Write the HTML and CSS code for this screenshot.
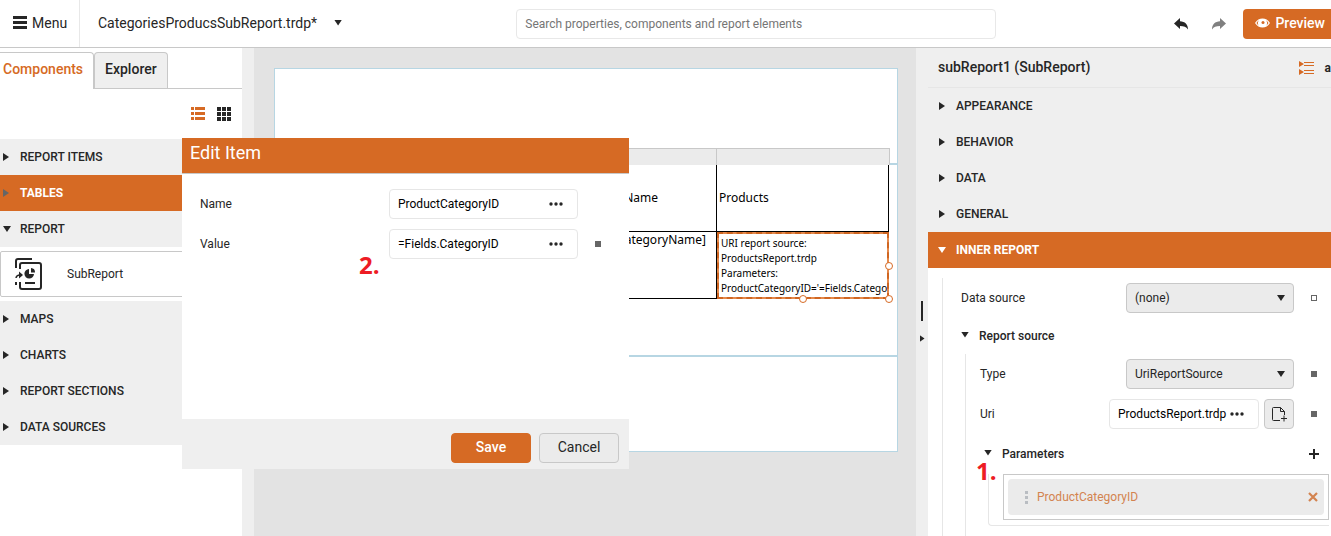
FILE: index.html
```html
<!DOCTYPE html>
<html lang="en">
<head>
<meta charset="utf-8">
<title>Web Report Designer</title>
<link rel="stylesheet" href="styles.css">
</head>
<body>
<div class="app">
  <header class="topbar">
    <button class="menu" type="button">
      <svg width="14" height="13" viewBox="0 0 14 13"><path d="M0 0h14v3H0zM0 5h14v3H0zM0 10h14v3H0z" fill="currentColor"/></svg>
      Menu
    </button>
    <button class="file" type="button">CategoriesProducsSubReport.trdp*<span class="tri-down"></span></button>
    <div class="search"><input type="text" aria-label="Search" placeholder="Search properties, components and report elements"></div>
    <div class="actions">
      <button class="icon-btn" type="button" aria-label="Undo">
        <svg width="14" height="12" viewBox="0 0 14 12"><path d="M0 5.500 6 0v3.200c5 .2 8 3 8 8.300-1.800-2.800-4-3.600-8-3.600V11z" fill="#262626"/></svg>
      </button>
      <button class="icon-btn" type="button" aria-label="Redo">
        <svg width="14" height="12" viewBox="0 0 14 12"><path d="M14 5.500 8 0v3.200C3 3.400 0 6.200 0 11.500c1.800-2.800 4-3.600 8-3.600V11z" fill="#808080"/></svg>
      </button>
      <button class="preview" type="button">
        <svg width="15" height="10" viewBox="0 0 15 10"><path d="M0 5C2 1.800 4.500.500 7.500.500S13 1.800 15 5c-2 3.200-4.500 4.500-7.500 4.500S2 8.200 0 5z" fill="#fff"/><path d="M4 2.200a4.300 4.300 0 0 0 0 5.600A8 8 0 0 1 1.500 5 8 8 0 0 1 4 2.200zM11 2.200a4.300 4.300 0 0 1 0 5.600A8 8 0 0 0 13.500 5 8 8 0 0 0 11 2.200z" fill="#d66a24"/><circle cx="8" cy="4.500" r="1.500" fill="#d66a24"/></svg>
        Preview
      </button>
    </div>
  </header>

  <div class="workspace">
    <aside class="left">
      <nav class="tabs">
        <button class="tab active" type="button">Components</button>
        <button class="tab" type="button">Explorer</button>
      </nav>
      <div class="view-tools">
        <button class="icon-btn" type="button" aria-label="List view">
          <svg width="14" height="14" viewBox="0 0 14 14"><path d="M0 0h3v3H0zM4 0h10v3H4zM0 5h3v3H0zM4 5h10v3H4zM0 10h3v3H0zM4 10h10v3H4z" fill="#d66a24"/></svg>
        </button>
        <button class="icon-btn" type="button" aria-label="Grid view">
          <svg width="14" height="14" viewBox="0 0 14 14"><path d="M0 0h4v4H0zM5 0h4v4H5zM10 0h4v4h-4zM0 5h4v4H0zM5 5h4v4H5zM10 5h4v4h-4zM0 10h4v4H0zM5 10h4v4H5zM10 10h4v4h-4z" fill="#262626"/></svg>
        </button>
      </div>
      <button class="group" type="button"><span class="tri-right"></span>REPORT ITEMS</button>
      <button class="group selected" type="button"><span class="tri-right"></span>TABLES</button>
      <button class="group" type="button"><span class="tri-down"></span>REPORT</button>
      <button class="component" type="button">
        <svg width="28" height="32" viewBox="0 0 28 32" fill="none" stroke="#262626" stroke-width="2"><path d="M17 1H3q-2 0-2 2v7M1 24v3M5 11V7q0-2 2-2h17q2 0 2 2v22q0 2-2 2H7q-2 0-2-2v-5"/><path d="M10 25h10"/><path d="M1 20q.500-3 4-3" stroke-width="1.500"/><path d="m4 13.500 4 3.500-4 3.500z" fill="#262626" stroke="none"/><path d="M14 11a4.800 4.800 0 1 0 5 5h-5z" fill="#262626" stroke="none"/><path d="M16 10v4.500h4A4.300 4.300 0 0 0 16 10z" fill="#262626" stroke="none"/></svg>
        SubReport
      </button>
      <button class="group" type="button"><span class="tri-right"></span>MAPS</button>
      <button class="group" type="button"><span class="tri-right"></span>CHARTS</button>
      <button class="group" type="button"><span class="tri-right"></span>REPORT SECTIONS</button>
      <button class="group" type="button"><span class="tri-right"></span>DATA SOURCES</button>
    </aside>
    <div class="splitter"></div>

    <main class="canvas">
      <div class="page">
        <div class="section"></div>
        <div class="section detail">
          <div class="report-table">
            <div class="ruler"><span></span><span></span></div>
            <table>
              <tr class="head"><td class="c1">Category Name</td><td class="c2">Products</td></tr>
              <tr><td class="c1 value">[CategoryName]</td><td class="c2 sub"><div class="source">URI report source:<br>ProductsReport.trdp<br>Parameters:<br>ProductCategoryID='=Fields.Catego</div></td></tr>
            </table>
            <i class="handle e"></i><i class="handle s"></i><i class="handle se"></i>
          </div>
        </div>
        <div class="section last"></div>
      </div>
    </main>
    <div class="splitter right-split"><span class="grip"></span><span class="tri-right"></span></div>

    <aside class="props">
      <div class="props-head">
        <h2>subReport1 (SubReport)</h2>
        <button class="icon-btn" type="button" aria-label="Categorized">
          <svg width="15" height="14" viewBox="0 0 15 14"><path d="M0 0l5 3-5 3zM0 8l5 3-5 3zM5 1h10v1H5zM5 4h10v1H5zM5 9h10v1H5zM5 12h10v1H5z" fill="#d66a24"/></svg>
        </button>
        <button class="sort" type="button">a</button>
      </div>
      <button class="category" type="button"><span class="tri-right"></span>APPEARANCE</button>
      <button class="category" type="button"><span class="tri-right"></span>BEHAVIOR</button>
      <button class="category" type="button"><span class="tri-right"></span>DATA</button>
      <button class="category" type="button"><span class="tri-right"></span>GENERAL</button>
      <button class="category selected" type="button"><span class="tri-down"></span>INNER REPORT</button>
      <div class="fields">
        <div class="row"><label for="ds">Data source</label>
          <div class="select"><select id="ds"><option>(none)</option></select><span class="tri-down"></span></div><span class="marker empty"></span></div>
        <button class="sub-head" type="button"><span class="tri-down"></span>Report source</button>
        <div class="nested">
          <div class="row"><label for="type">Type</label>
            <div class="select"><select id="type"><option>UriReportSource</option></select><span class="tri-down"></span></div><span class="marker"></span></div>
          <div class="row"><label for="uri">Uri</label>
            <div class="textbox uri"><input id="uri" type="text" value="ProductsReport.trdp"><button type="button" class="dots" aria-label="Edit Uri"><svg width="14" height="4" viewBox="0 0 14 4"><circle cx="2" cy="2" r="1.700"/><circle cx="7" cy="2" r="1.700"/><circle cx="12" cy="2" r="1.700"/></svg></button></div>
            <button class="new-file" type="button" aria-label="New report"><svg width="15" height="15" viewBox="0 0 15 15" fill="none" stroke="#262626"><path d="M8 13.500H1.500q-1 0-1-1v-11q0-1 1-1h7l4 4V8M8.500.500v4h4M9 11.500h6M12 8.500v6"/></svg></button>
            <span class="marker"></span></div>
          <div class="param-head"><button class="sub-head" type="button"><span class="tri-down"></span>Parameters</button>
            <button class="icon-btn" type="button" aria-label="Add parameter"><svg width="10" height="10" viewBox="0 0 10 10"><path d="M4 0h2v4h4v2H6v4H4V6H0V4h4z" fill="#262626"/></svg></button></div>
          <div class="params">
            <div class="param-box"><div class="param">
              <svg width="3" height="13" viewBox="0 0 3 13" fill="#b9bdc2"><path d="M0 0h3v3H0zM0 5h3v3H0zM0 10h3v3H0z"/></svg>
              <span>ProductCategoryID</span>
              <button class="icon-btn" type="button" aria-label="Remove parameter"><svg width="10" height="10" viewBox="0 0 10 10"><path d="m1 1 8 8M9 1 1 9" stroke="#d3834f" stroke-width="2.200"/></svg></button>
            </div></div>
          </div>
        </div>
      </div>
      <b class="callout one">1.</b>
    </aside>
  </div>

  <div class="dialog" role="dialog" aria-label="Edit Item">
    <h1>Edit Item</h1>
    <div class="dialog-body">
      <div class="dialog-row"><label for="name">Name</label>
        <div class="textbox"><input id="name" type="text" value="ProductCategoryID"><button type="button" class="dots" aria-label="Edit name"><svg width="14" height="4" viewBox="0 0 14 4"><circle cx="2" cy="2" r="1.700"/><circle cx="7" cy="2" r="1.700"/><circle cx="12" cy="2" r="1.700"/></svg></button></div></div>
      <div class="dialog-row"><label for="value">Value</label>
        <div class="textbox"><input id="value" type="text" value="=Fields.CategoryID"><button type="button" class="dots" aria-label="Edit value"><svg width="14" height="4" viewBox="0 0 14 4"><circle cx="2" cy="2" r="1.700"/><circle cx="7" cy="2" r="1.700"/><circle cx="12" cy="2" r="1.700"/></svg></button></div><span class="marker"></span></div>
    </div>
    <div class="dialog-foot"><button class="btn primary" type="button">Save</button><button class="btn" type="button">Cancel</button></div>
    <b class="callout two">2.</b>
  </div>
</div>
</body>
</html>
```
FILE: styles.css
```css
* { box-sizing: border-box; }
body { margin: 0; font: 12px/16px Roboto, sans-serif; color: #262626; background: #fff; }
button, input, select { font: inherit; color: inherit; margin: 0; padding: 0; border: 0; background: none; }
button { cursor: pointer; text-align: left; }
svg { display: block; flex: none; }
.app { position: relative; display: flex; flex-direction: column; height: 100vh; overflow: hidden; }

.tri-right { flex: none; width: 6px; height: 8px; background: currentColor; clip-path: polygon(0 0, 100% 50%, 0 100%); }
.tri-down { flex: none; width: 8px; height: 6px; background: currentColor; clip-path: polygon(0 0, 100% 0, 50% 100%); }
.icon-btn { display: flex; }

/* Top bar */
.topbar { flex: none; display: flex; align-items: center; height: 48px; border-bottom: 1px solid #c8c8c8; font-size: 14px; }
.menu { display: flex; align-items: center; gap: 5px; width: 80px; padding: 0 0 2px 13px; align-self: stretch; border-right: 1px solid #e8e8e8; }
.file { display: flex; align-items: center; gap: 17px; padding: 0 0 2px 18px; }
.search { flex: 1; display: flex; justify-content: center; padding-right: 4px; }
.search input { width: 480px; height: 30px; padding: 0 8px; border: 1px solid #e8e8e8; border-radius: 4px; font-size: 12px; }
.search input::placeholder { color: #757575; opacity: 1; }
.actions { display: flex; align-items: center; gap: 24px; }
.preview { display: flex; align-items: center; gap: 5px; height: 30px; padding: 0 6px 2px 12px; margin-left: -7px; border-radius: 4px 0 0 4px; background: #d66a24; color: #fff; font-weight: 500; }

.workspace { flex: 1; display: flex; min-height: 0; }

/* Components panel */
.left { flex: none; width: 242px; padding-top: 4px; display: flex; flex-direction: column; }
.tabs { flex: none; display: flex; height: 37px; border-bottom: 1px solid #c8c8c8; font-size: 14px; font-weight: 500; }
.tab { height: 36px; padding: 0 10px 3px; border: 1px solid #c8c8c8; border-bottom: 0; border-radius: 4px 4px 0 0; background: #efefef; }
.tab.active { height: 37px; padding: 0 10px 4px 3px; border-left: 0; border-radius: 0 4px 0 0; background: #fff; color: #d66a24; }
.view-tools { flex: none; display: flex; justify-content: flex-end; align-items: center; gap: 12px; height: 50px; padding-right: 11px; }
.group, .category { flex: none; display: flex; align-items: center; height: 36px; background: #efefef; font-weight: 500; }
.group { gap: 11px; padding-left: 3px; }
.group > .tri-down { margin-right: -2px; }
.group.selected, .category.selected { background: #d66a24; color: #fff; font-weight: 700; }
.group.selected .tri-right { color: #666; }
.component { flex: none; display: flex; align-items: center; gap: 24px; height: 46px; margin: 4px 0; padding-left: 14px; border: 1px solid #c8c8c8; border-radius: 2px; }

.splitter { flex: none; width: 12px; background: #efefef; }
.right-split { display: flex; flex-direction: column; align-items: center; justify-content: center; gap: 14px; padding-top: 59px; }
.grip { width: 2px; height: 20px; background: #262626; }
.right-split .tri-right { width: 5px; height: 7px; }

/* Design surface */
.canvas { flex: 1; padding: 20px 18px 0 20px; background: #e3e3e3; min-width: 0; }
.page { border: 1px solid #b7d6e3; background: #fff; color: #000; font-family: "Noto Sans", sans-serif; }
.section { height: 96px; border-bottom: 2px solid #b7d6e3; }
.section.detail { position: relative; height: 192px; }
.section.last { height: 94px; border: 0; }
.report-table { position: absolute; right: 7px; top: -17px; width: 327px; }
.ruler { display: flex; height: 17px; border: 1px solid #c8c8c8; border-bottom: 0; background: #ebebeb; }
.ruler span { flex: 1; }
.ruler span + span { flex: none; width: 173px; border-left: 1px solid #c8c8c8; }
.report-table table { width: 326px; border-collapse: collapse; table-layout: fixed; }
.report-table td { height: 67px; padding: 0 2px; border: 1px solid #000; border-top: 0; }
.report-table .head td { height: 66px; }
.report-table .head .c1 { padding-left: 6px; }
.report-table .c2 { width: 172px; }
.report-table .value { padding: 0 10px 0 0; vertical-align: top; text-align: right; }
.report-table .sub { position: relative; padding: 0; }
.sub::after { content: ""; position: absolute; inset: 0 -1px -1px 0; border: 2px solid #e58a4c; outline: 2px dashed #cf6622; outline-offset: -2px; }
.source { height: 66px; padding: 4px 0 0 4px; overflow: hidden; font-size: 10px; line-height: 15px; white-space: nowrap; }
.handle { position: absolute; width: 8px; height: 8px; border: 1px solid #d66a24; border-radius: 50%; background: #fff; }
.handle.e { right: -3px; bottom: 29px; }
.handle.s { right: 83px; bottom: -4px; }
.handle.se { right: -3px; bottom: -4px; }

/* Properties panel */
.props { position: relative; flex: none; width: 403px; display: flex; flex-direction: column; }
.props-head { flex: none; display: flex; align-items: center; height: 40px; padding: 0 0 0 10px; background: #efefef; border-bottom: 1px solid #e6e6e6; }
.props-head h2 { flex: 1; margin: 0; padding-bottom: 2px; font-size: 14px; font-weight: 500; }
.sort { margin-left: 11px; font-weight: 700; }
.category { gap: 10px; padding-left: 10px; }
.category > .tri-right { margin-right: 1px; margin-left: 1px; }
.fields { flex: 1; margin: 10px 0 0 14px; border-left: 1px solid #e6e6e6; }
.row { display: flex; align-items: center; height: 40px; padding: 0 14px 0 18px; }
.row label { flex: 1; }
.select { position: relative; width: 168px; height: 30px; }
.select select { width: 100%; height: 30px; padding: 0 8px; appearance: none; border: 1px solid #c8c8c8; border-radius: 4px; background: #ebebeb; }
.select .tri-down { position: absolute; right: 9px; top: 12px; }
.marker { flex: none; width: 6px; height: 6px; margin-left: 17px; background: #666; }
.marker.empty { background: #fff; border: 1px solid #666; }
.sub-head { display: flex; align-items: center; gap: 10px; height: 36px; padding-left: 18px; font-weight: 500; }
.sub-head .tri-down { margin-bottom: 3px; }
.nested { height: 100%; margin-left: 22px; border-left: 1px solid #e6e6e6; }
.nested .row { padding-left: 14px; }
.textbox { display: flex; align-items: center; width: 189px; height: 30px; padding: 0 14px 0 8px; border: 1px solid #e6e6e6; border-radius: 4px; background: #fff; color: #000; }
.textbox input { flex: 1; min-width: 0; outline: 0; }
.textbox.uri { width: 150px; }
.dots { fill: #262626; }
.new-file { display: flex; align-items: center; justify-content: center; width: 30px; height: 30px; margin-left: 5px; border: 1px solid #c8c8c8; border-radius: 4px; background: #ebebeb; }
.param-head { display: flex; align-items: center; justify-content: space-between; height: 40px; padding-right: 12px; }
.params { margin: 0 2px 0 22px; padding: 0 0 5px 14px; border: 1px solid #e6e6e6; border-width: 0 0 1px 1px; border-radius: 0 0 0 4px; }
.param-box { padding: 4px; border: 1px solid #c8c8c8; }
.param { display: flex; align-items: center; gap: 9px; height: 36px; padding: 0 6px 0 17px; border-radius: 4px; background: #ebebeb; color: #d3834f; }
.param span { flex: 1; }

/* Edit dialog */
.dialog { position: absolute; left: 182px; top: 138px; width: 447px; background: #fff; }
.dialog h1 { height: 36px; margin: 0; padding: 3px 8px; border-bottom: 1px solid #c8c8c8; background: #d66a24; color: #fff; font-size: 18px; line-height: 24px; font-weight: 400; }
.dialog-body { display: flex; flex-direction: column; gap: 10px; height: 245px; padding: 15px 28px 0 18px; }
.dialog-row { display: flex; align-items: center; }
.dialog-row label { width: 189px; }
.dialog-foot { display: flex; justify-content: flex-end; gap: 8px; padding: 14px 10px 6px; background: #efefef; }
.btn { width: 80px; height: 30px; padding-bottom: 2px; border: 1px solid #c8c8c8; border-radius: 4px; background: #ebebeb; font-size: 14px; text-align: center; }
.btn.primary { border-color: #d66a24; background: #d66a24; color: #fff; font-weight: 500; }
.callout { position: absolute; color: #ed1c24; font: 700 24px/24px "Open Sans", sans-serif; }
.callout.one { left: 48px; top: 411px; }
.callout.two { left: 177px; top: 115px; }
```
